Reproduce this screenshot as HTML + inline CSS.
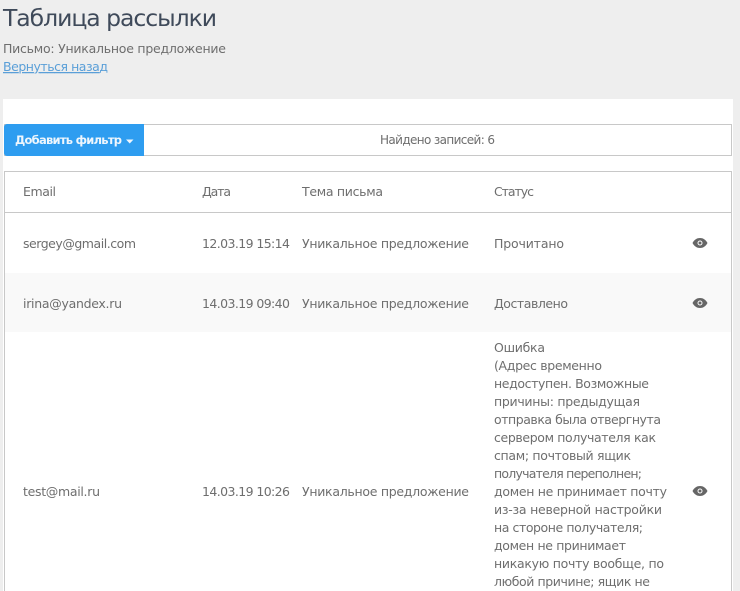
<!DOCTYPE html>
<html><head><meta charset="utf-8"><style>
html,body{margin:0;padding:0;width:740px;height:591px;overflow:hidden;background:#eee}
svg{position:absolute;left:0;top:0;display:block}
text{font-family:"DejaVu Sans","Liberation Sans",sans-serif;font-size:12.5px;fill:#6e6e6e}
</style></head><body>
<svg width="740" height="591" viewBox="0 0 740 591" xmlns="http://www.w3.org/2000/svg">
<rect width="740" height="591" fill="#eeeeee"/>
<rect x="3" y="99" width="730" height="492" fill="#fff"/>
<text x="3" y="26" textLength="214" style="font-size:23.5px;fill:#3f4a5a">Таблица рассылки</text>
<text x="3" y="53" textLength="223">Письмо: Уникальное предложение</text>
<text x="3" y="71" textLength="105" style="fill:#5a9fd8" text-decoration="underline">Вернуться назад</text>

<rect x="4.500" y="124.500" width="727" height="31" fill="#fff" stroke="#c8c8c8"/>
<path d="M7 124H144V156H7a3 3 0 0 1-3-3V127a3 3 0 0 1 3-3z" fill="#2e9df0"/>
<text x="15" y="144" textLength="107" style="font-weight:bold;fill:#eef6fd;font-size:11.500px">Добавить фильтр</text>
<path d="M126 139.500h7.500l-3.750 4z" fill="#eef6fd"/>
<text x="380" y="144" textLength="115" style="font-size:12px">Найдено записей: 6</text>

<rect x="4.500" y="171.500" width="727" height="430" fill="#fff" stroke="#c8c8c8"/>
<rect x="5" y="273" width="726" height="59" fill="#f9f9f9"/>
<rect x="4" y="212" width="728" height="1" fill="#c8c8c8"/>

<text x="23" y="196" textLength="33">Email</text>
<text x="202" y="196" textLength="29">Дата</text>
<text x="302" y="196" textLength="81">Тема письма</text>
<text x="494" y="196" textLength="40">Статус</text>

<text x="23" y="248" textLength="113">sergey@gmail.com</text>
<text x="202" y="248" textLength="88">12.03.19 15:14</text>
<text x="302" y="248" textLength="167">Уникальное предложение</text>
<text x="494" y="248" textLength="70">Прочитано</text>

<text x="23" y="308" textLength="99">irina@yandex.ru</text>
<text x="202" y="308" textLength="88">14.03.19 09:40</text>
<text x="302" y="308" textLength="167">Уникальное предложение</text>
<text x="494" y="308" textLength="74">Доставлено</text>

<text x="23" y="496" textLength="77">test@mail.ru</text>
<text x="202" y="496" textLength="88">14.03.19 10:26</text>
<text x="302" y="496" textLength="167">Уникальное предложение</text>

<text x="494" y="352" textLength="51">Ошибка</text>
<text x="494" y="370" textLength="108">(Адрес временно</text>
<text x="494" y="388" textLength="155">недоступен. Возможные</text>
<text x="494" y="406" textLength="146">причины: предыдущая</text>
<text x="494" y="424" textLength="167">отправка была отвергнута</text>
<text x="494" y="442" textLength="162">сервером получателя как</text>
<text x="494" y="460" textLength="137">спам; почтовый ящик</text>
<text x="494" y="478" textLength="148">получателя переполнен;</text>
<text x="494" y="496" textLength="173">домен не принимает почту</text>
<text x="494" y="514" textLength="168">из-за неверной настройки</text>
<text x="494" y="532" textLength="149">на стороне получателя;</text>
<text x="494" y="550" textLength="132">домен не принимает</text>
<text x="494" y="568" textLength="170">никакую почту вообще, по</text>
<text x="494" y="586" textLength="156">любой причине; ящик не</text>

<g fill="#666">
<path fill-rule="evenodd" d="M692.500 243c1.900-3.400 4.500-5 7.500-5s5.600 1.600 7.500 5c-1.900 3.400-4.500 5-7.500 5s-5.600-1.600-7.500-5zM700 240.500a2.500 2.500 0 1 0 0 5a2.500 2.500 0 0 0 0-5z"/>
<circle cx="700" cy="243" r="1.500"/>
<path fill-rule="evenodd" d="M692.500 303c1.900-3.400 4.500-5 7.500-5s5.600 1.600 7.500 5c-1.900 3.400-4.500 5-7.500 5s-5.600-1.600-7.500-5zM700 300.500a2.500 2.500 0 1 0 0 5a2.500 2.500 0 0 0 0-5z"/>
<circle cx="700" cy="303" r="1.500"/>
<path fill-rule="evenodd" d="M692.500 491c1.900-3.400 4.500-5 7.500-5s5.600 1.600 7.500 5c-1.900 3.400-4.500 5-7.500 5s-5.600-1.600-7.500-5zM700 488.500a2.500 2.500 0 1 0 0 5a2.500 2.500 0 0 0 0-5z"/>
<circle cx="700" cy="491" r="1.500"/>
</g>
</svg>
</body></html>
